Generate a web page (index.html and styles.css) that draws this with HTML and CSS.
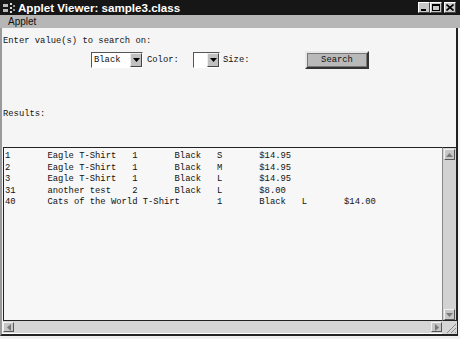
FILE: index.html
```html
<!DOCTYPE html>
<html lang="en">
<head>
    <meta charset="UTF-8">
    <title>Applet Viewer: sample3.class</title>
    <link rel="stylesheet" href="styles.css">
</head>
<body>
    <div class="window">
        <div class="titlebar">
            <svg class="app-icon" width="12" height="10" viewBox="0 0 12 10">
                <rect x="0" y="1" width="5" height="3" fill="#bbb"/>
                <rect x="0" y="6" width="5" height="3" fill="#bbb"/>
                <rect x="7" y="0" width="2" height="2" fill="#ddd"/>
                <rect x="7" y="4" width="2" height="2" fill="#ddd"/>
                <rect x="7" y="8" width="2" height="2" fill="#ddd"/>
                <rect x="10" y="2" width="2" height="2" fill="#999"/>
                <rect x="10" y="6" width="2" height="2" fill="#999"/>
            </svg>
            <span class="title">Applet Viewer: sample3.class</span>
            <div class="win-buttons">
                <span class="win-btn"><svg width="8" height="7" viewBox="0 0 8 7"><rect x="1" y="5" width="5" height="2" fill="#000"/></svg></span>
                <span class="win-btn"><svg width="8" height="7" viewBox="0 0 8 7"><rect x="0.5" y="0.5" width="7" height="6" fill="none" stroke="#000"/><rect x="0" y="0" width="8" height="2" fill="#000"/></svg></span>
                <span class="win-btn close"><svg width="8" height="7" viewBox="0 0 8 7"><path d="M0.5 0.5 L7.5 6.5 M7.5 0.5 L0.5 6.5" stroke="#000" stroke-width="1.6"/></svg></span>
            </div>
        </div>
        <div class="menubar"><span>Applet</span></div>

        <div class="content">
            <div class="prompt">Enter value(s) to search on:</div>

            <div class="search-row">
                <div class="choice wide">
                    <span class="choice-text">Black</span>
                    <span class="choice-btn"><svg width="7" height="4" viewBox="0 0 7 4"><path d="M0 0 H7 L3.5 4 Z" fill="#000"/></svg></span>
                </div>
                <span class="lbl color-lbl">Color:</span>
                <div class="choice narrow">
                    <span class="choice-text"></span>
                    <span class="choice-btn"><svg width="7" height="4" viewBox="0 0 7 4"><path d="M0 0 H7 L3.5 4 Z" fill="#000"/></svg></span>
                </div>
                <span class="lbl size-lbl">Size:</span>
                <button class="search-btn">Search</button>
            </div>

            <div class="results-lbl">Results:</div>

            <div class="listbox">
                <pre class="rows">1	Eagle T-Shirt	1	Black	S	$14.95
2	Eagle T-Shirt	1	Black	M	$14.95
3	Eagle T-Shirt	1	Black	L	$14.95
31	another test	2	Black	L	$8.00
40	Cats of the World T-Shirt	1	Black	L	$14.00</pre>
                <div class="vscroll">
                    <span class="arrow"><svg width="7" height="4" viewBox="0 0 7 4"><path d="M0 4 H7 L3.5 0 Z" fill="#777"/></svg></span>
                    <span class="arrow"><svg width="7" height="4" viewBox="0 0 7 4"><path d="M0 0 H7 L3.5 4 Z" fill="#777"/></svg></span>
                </div>
                <div class="hscroll">
                    <span class="arrow"><svg width="4" height="7" viewBox="0 0 4 7"><path d="M4 0 V7 L0 3.5 Z" fill="#777"/></svg></span>
                    <span class="arrow"><svg width="4" height="7" viewBox="0 0 4 7"><path d="M0 0 V7 L4 3.5 Z" fill="#777"/></svg></span>
                </div>
                <div class="grip">
                    <svg width="12" height="12" viewBox="0 0 12 12">
                        <path d="M11 2 L2 11 M11 6 L6 11 M11 10 L10 11" stroke="#888" stroke-width="1"/>
                    </svg>
                </div>
            </div>
        </div>
    </div>
</body>
</html>
```

FILE: styles.css
```css
html, body {
    margin: 0;
    padding: 0;
    background: #f6f6f6;
}
.window {
    width: 460px;
    height: 339px;
    display: flex;
    flex-direction: column;
    box-sizing: border-box;
    border-bottom: 3px solid #f0f0f0;
    overflow: hidden;
}
.titlebar {
    height: 17px;
    background: #161616;
    display: flex;
    align-items: center;
    padding: 0 4px 0 3px;
    box-sizing: border-box;
}
.app-icon {
    margin-right: 3px;
}
.title {
    color: #fff;
    font-family: "Liberation Sans", Arial, sans-serif;
    font-weight: bold;
    font-size: 11.6px;
}
.win-buttons {
    margin-left: auto;
    display: flex;
    gap: 0;
}
.win-btn {
    width: 12px;
    height: 11px;
    background: #c8c8c8;
    border: 1px solid;
    border-color: #fff #444 #444 #fff;
    box-sizing: border-box;
    display: flex;
    align-items: center;
    justify-content: center;
}
.win-btn.close {
    margin-left: 2px;
}
.menubar {
    height: 13px;
    background: #b6b6b6;
    font-family: "Liberation Sans", Arial, sans-serif;
    font-size: 10px;
    line-height: 13px;
    padding-left: 8px;
    color: #111;
}
.content {
    flex: 1;
    background: #f5f5f5;
    border-left: 2px solid #9a9a9a;
    border-right: 2px solid #222;
    border-bottom: 2px solid #222;
    margin-right: 2px;
    display: flex;
    flex-direction: column;
    font-family: "Liberation Mono", "Courier New", monospace;
    font-size: 8.83px;
    color: #111;
}
.prompt {
    margin: 8px 0 0 1px;
    line-height: 11px;
}
.search-row {
    display: flex;
    align-items: center;
    margin-top: 4px;
    padding-left: 89px;
    height: 18px;
}
.choice {
    height: 16px;
    box-sizing: border-box;
    border: 1px solid;
    border-color: #555 #fff #fff #555;
    background: #fff;
    display: flex;
    align-items: stretch;
}
.choice.wide {
    width: 52px;
}
.choice.narrow {
    width: 27px;
}
.choice-text {
    flex: 1;
    padding-left: 2px;
    line-height: 14px;
}
.choice-btn {
    width: 12px;
    background: #c0c0c0;
    border: 1px solid;
    border-color: #eee #444 #444 #eee;
    box-sizing: border-box;
    display: flex;
    align-items: center;
    justify-content: center;
}
.color-lbl {
    margin-left: 4px;
    width: 46px;
}
.size-lbl {
    margin-left: 3px;
    width: 82px;
}
.search-btn {
    width: 64px;
    height: 18px;
    padding: 0;
    background: #b9b9b9;
    border: 2px solid;
    border-color: #e8e8e8 #333 #333 #e8e8e8;
    outline: 1px solid #777;
    outline-offset: -3px;
    font-family: "Liberation Mono", "Courier New", monospace;
    font-size: 8.83px;
    color: #111;
}
.results-lbl {
    margin: 40px 0 0 1px;
    line-height: 11px;
}
.listbox {
    margin: 27px 0 0 1px;
    width: 454px;
    height: 187px;
    display: grid;
    grid-template-columns: 1fr 15px;
    grid-template-rows: 1fr 13px;
}
.rows {
    margin: 0;
    padding: 3px 0 0 1px;
    border: 1px solid #222;
    border-right: none;
    background: #f7f7f7;
    font-family: "Liberation Mono", "Courier New", monospace;
    font-size: 8.83px;
    line-height: 11.5px;
    tab-size: 8;
    color: #111;
}
.vscroll {
    border: 1px solid #222;
    border-left: 1px solid #888;
    background: #d2d2d2;
    display: flex;
    flex-direction: column;
    justify-content: space-between;
    align-items: center;
    padding: 1px 0 0;
}
.hscroll {
    background: #d6d6d6;
    border-bottom: 1px solid #fff;
    display: flex;
    justify-content: space-between;
    align-items: stretch;
    padding: 1px 0;
}
.arrow {
    width: 11px;
    height: 11px;
    box-sizing: border-box;
    background: #c6c6c6;
    border: 1px solid;
    border-color: #f0f0f0 #555 #555 #f0f0f0;
    display: flex;
    align-items: center;
    justify-content: center;
}
.hscroll .arrow {
    height: auto;
}
.grip {
    background: #d6d6d6;
    display: flex;
    align-items: flex-end;
    justify-content: flex-end;
}
```
